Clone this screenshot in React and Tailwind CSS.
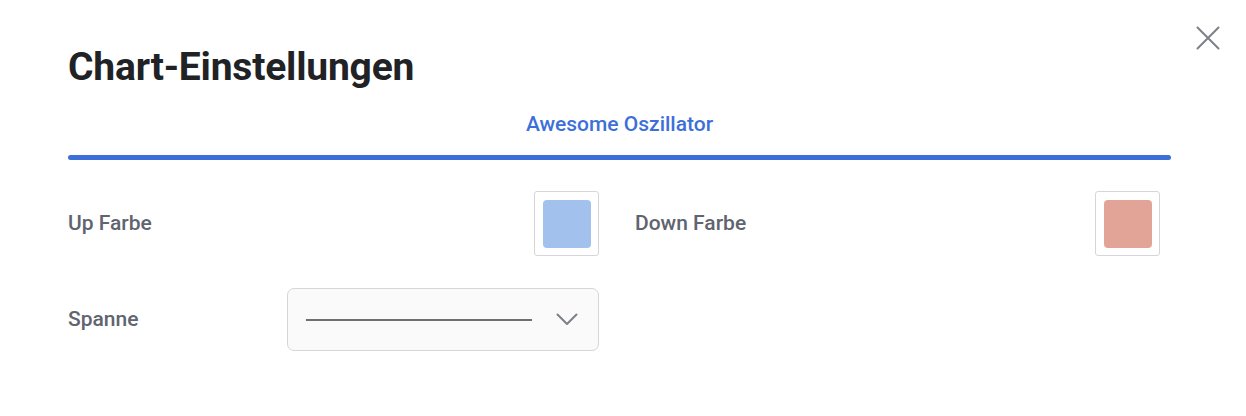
import React from "react";

function Swatch({ color }) {
  return (
    <div className="w-[65px] h-[65px] border border-[#d4d6da] rounded-[3px] flex items-center justify-center bg-white">
      <div className={`w-[48px] h-[48px] rounded-[4px] ${color}`} />
    </div>
  );
}

export default function App() {
  return (
    <div className="relative w-[1246px] h-[416px] bg-white font-['Roboto',sans-serif] overflow-hidden">
      <button className="absolute left-[1196px] top-[26px] w-[24px] h-[24px] flex items-center justify-center">
        <svg width="24" height="24" viewBox="0 0 24 24" fill="none">
          <path d="M1.5 1.5 L22.5 22.5 M22.5 1.5 L1.5 22.5" stroke="#7d808a" strokeWidth="2" strokeLinecap="round" />
        </svg>
      </button>

      <div className="pl-[68px] pt-[45px] w-[1171px]">
        <h1 className="text-[39px] leading-[44px] font-bold text-[#202226] tracking-[-0.2px]">
          Chart-Einstellungen
        </h1>

        <div className="mt-[22px] flex flex-col items-center">
          <div className="text-[21px] leading-[26px] font-medium text-[#3d6fd9]">Awesome Oszillator</div>
          <div className="mt-[18px] w-full h-[5px] rounded-full bg-[#3d6fd9]" />
        </div>

        <div className="mt-[31px] flex items-center">
          <div className="w-[531px] flex items-center justify-between">
            <span className="text-[21px] font-medium text-[#60646f]">Up Farbe</span>
            <Swatch color="bg-[#a2c1ec]" />
          </div>
          <div className="ml-[36px] w-[525px] flex items-center justify-between">
            <span className="text-[21px] font-medium text-[#60646f]">Down Farbe</span>
            <Swatch color="bg-[#e1a496]" />
          </div>
        </div>

        <div className="mt-[32px] flex items-center">
          <span className="w-[219px] text-[21px] font-medium text-[#60646f]">Spanne</span>
          <div className="w-[312px] h-[63px] rounded-[7px] border border-[#d4d6da] bg-[#fafafa] flex items-center pl-[18px] pr-[20px]">
            <div className="w-[226px] h-[2px] bg-[#6f6f70]" />
            <svg className="ml-auto" width="22" height="13" viewBox="0 0 22 13" fill="none">
              <path d="M1.5 1.5 L11 11 L20.5 1.5" stroke="#7d808a" strokeWidth="2" strokeLinecap="round" strokeLinejoin="round" />
            </svg>
          </div>
        </div>
      </div>
    </div>
  );
}
